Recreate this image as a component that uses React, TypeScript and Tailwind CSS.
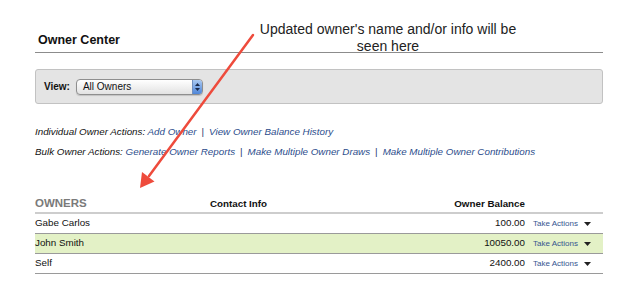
import React from 'react';

const owners = [
  { name: 'Gabe Carlos', balance: '100.00', highlight: false },
  { name: 'John Smith', balance: '10050.00', highlight: true },
  { name: 'Self', balance: '2400.00', highlight: false },
];

const Sep = () => <span className="mx-[5px] not-italic text-[#1f3570]">|</span>;

const Link = ({ children }: { children: React.ReactNode }) => (
  <span className="text-[#2c4d8c]">{children}</span>
);

const Caret = () => (
  <svg width="7" height="4" viewBox="0 0 7 4" className="ml-[6px]">
    <path d="M0 0 L7 0 L3.5 4 Z" fill="#222" />
  </svg>
);

export default function App() {
  return (
    <div
      className="relative w-[639px] h-[293px] overflow-hidden bg-white text-[#111] pl-[35px] pr-[36px]"
      style={{ fontFamily: '"Liberation Sans", Arial, Helvetica, sans-serif' }}
    >
      {/* page heading */}
      <div className="pt-[33px] pb-[4px] border-b border-[#8c8c8c]">
        <h1 className="text-[12.5px] leading-[15px] font-bold pl-[3px]">Owner Center</h1>
      </div>

      {/* view filter */}
      <div className="mt-[16px] h-[35px] flex items-center pl-[8px] bg-[#e4e4e4] border border-[#c2c2c2] rounded-[3px]">
        <span className="text-[10px] font-bold mr-[6px]">View:</span>
        <div className="w-[127px] h-[16px] flex items-center rounded-[4px] border border-[#8e8e8e] bg-gradient-to-b from-white to-[#e2e2e2] shadow-[0_1px_1px_rgba(0,0,0,0.15)] overflow-hidden">
          <span className="flex-1 text-[10px] leading-[14px] pl-[6px]">All Owners</span>
          <div className="w-[10px] h-full flex flex-col items-center justify-center gap-[2px] bg-gradient-to-b from-[#a9c8f0] to-[#4f86d8] border-l border-[#6f8fc0]">
            <svg width="5" height="3" viewBox="0 0 5 3"><path d="M0 3 L2.5 0 L5 3 Z" fill="#1a2a4a" /></svg>
            <svg width="5" height="3" viewBox="0 0 5 3"><path d="M0 0 L5 0 L2.5 3 Z" fill="#1a2a4a" /></svg>
          </div>
        </div>
      </div>

      {/* action links */}
      <div className="mt-[18px] text-[9.8px] leading-[20px] italic">
        <div>
          <span>Individual Owner Actions: </span>
          <Link>Add Owner</Link>
          <Sep />
          <Link>View Owner Balance History</Link>
        </div>
        <div>
          <span>Bulk Owner Actions: </span>
          <Link>Generate Owner Reports</Link>
          <Sep />
          <Link>Make Multiple Owner Draws</Link>
          <Sep />
          <Link>Make Multiple Owner Contributions</Link>
        </div>
      </div>

      {/* owners table */}
      <div className="mt-[34px]">
        <div className="flex items-end h-[18px] pb-[2px] border-b-2 border-[#cdcdcd]">
          <div className="w-[140px] text-[11.5px] leading-[14px] font-bold text-[#7a7a7a]">OWNERS</div>
          <div className="w-[127px] text-center text-[9.8px] leading-[13px] font-bold">Contact Info</div>
          <div className="w-[223px] text-right text-[9.8px] leading-[13px] font-bold">Owner Balance</div>
          <div className="flex-1" />
        </div>
        {owners.map((o) => (
          <div
            key={o.name}
            className={`flex items-center h-[20px] border-b border-[#9a9a9a] text-[9.8px] ${o.highlight ? 'bg-[#e3f1c6]' : ''}`}
          >
            <div className="w-[140px]">{o.name}</div>
            <div className="w-[127px]" />
            <div className="w-[223px] text-right">{o.balance}</div>
            <div className="flex-1 flex items-center pl-[8px] text-[8px] text-[#35558f]">
              Take Actions
              <Caret />
            </div>
          </div>
        ))}
      </div>

      {/* annotation overlay */}
      <div className="absolute left-[248px] top-[21px] w-[280px] text-center text-[14px] leading-[17px] text-[#222]">
        Updated owner's name and/or info will be seen here
      </div>
      <svg className="absolute left-0 top-0 pointer-events-none" width="639" height="293">
        <line x1="253" y1="35" x2="149" y2="176" stroke="#ee4b3c" strokeWidth="2.5" strokeLinecap="round" />
        <polygon points="140,188 154.5,181.5 142,172" fill="#ee4b3c" />
      </svg>
    </div>
  );
}
